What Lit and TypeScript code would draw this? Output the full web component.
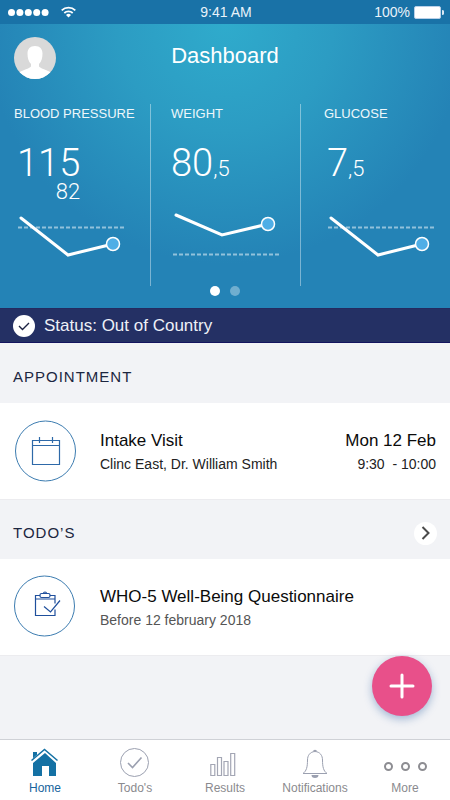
import { LitElement, html, css, svg, nothing } from "lit";
import { customElement, property } from "lit/decorators.js";
import { classMap } from "lit/directives/class-map.js";

interface Metric {
  label: string;
  value: string;
  fraction?: string;
  secondary?: string;
  points: [number, number][];
  target: number;
}

const METRICS: Metric[] = [
  { label: "BLOOD PRESSURE", value: "115", secondary: "82", points: [[7, 8], [54, 45], [99, 34]], target: 18 },
  { label: "WEIGHT", value: "80", fraction: ",5", points: [[5, 5], [51, 25], [97, 14]], target: 45 },
  { label: "GLUCOSE", value: "7", fraction: ",5", points: [[7, 8], [54, 45], [98, 34]], target: 18 },
];

const NAV = [
  {
    label: "Home",
    icon: svg`<g fill="#1471a4"><path d="M3 5h4v4l-4 4z"/><path d="M15 6l11 10v13h-7v-10h-7v10H3V16z"/></g>
      <path d="M1.500 14.500L14.500 3l13 11.500" fill="none" stroke="#fff" stroke-width="3"/>
      <path d="M1.500 13.500L14.500 2.500l13 11" fill="none" stroke="#1471a4" stroke-width="1.500"/>`,
  },
  {
    label: "Todo's",
    icon: svg`<g fill="none" stroke="#9ba0b0"><circle cx="14.500" cy="15.500" r="14"/>
      <path d="M8 16l4.500 4.500 9-10" stroke-width="1.600"/></g>`,
  },
  {
    label: "Results",
    icon: svg`<g fill="none" stroke="#a3a6b4" stroke-width="1.200"><path d="M.8 17.500h4v11h-4zM7.500 10.500h4v18h-4zM14 14.500h4v14h-4zM20.700 6.500h4v22h-4z"/></g>`,
  },
  {
    label: "Notifications",
    icon: svg`<path d="M15 4.500c-5 .3-7.500 4-7.500 8.500 0 7-1 11-4.500 13.500h24c-3.500-2.500-4.500-6.500-4.500-13.500 0-4.500-2.500-8.200-7.500-8.500z" fill="none" stroke="#9ba0b0"/>
      <path d="M13 4.500a2 1.700 0 0 1 4 0zM11.500 28h7a3.500 3 0 0 1-7 0z" fill="#9ba0b0"/>`,
  },
  { label: "More", icon: nothing },
];

@customElement("metric-tile")
class MetricTile extends LitElement {
  @property({ attribute: false }) metric!: Metric;

  static styles = css`
    :host { display: block; color: #fff; }
    .label { margin: 0 0 21px; font: 400 13px/20px "Liberation Sans", Arial, sans-serif; white-space: nowrap; color: #eef7fb; }
    .figure { height: 58px; font-family: Roboto, "Liberation Sans", sans-serif; font-weight: 300; }
    .block { display: inline-flex; flex-direction: column; }
    .value { font-size: 38px; line-height: 36px; }
    .fraction { font-size: 22px; }
    .secondary { font-size: 22px; line-height: 22px; text-align: right; }
    .indent { padding-left: 3px; }
    .chart { display: block; margin-top: 7px; width: 120px; height: 50px; }
  `;

  render() {
    const m = this.metric;
    const end = m.points[m.points.length - 1];
    const left = m.points[0][0] - 3;
    return html`
      <h2 class="label">${m.label}</h2>
      <div class=${classMap({ figure: true, indent: left > 3 })}>
        <div class="block">
          <span class="value">${m.value}${m.fraction ? html`<span class="fraction">${m.fraction}</span>` : nothing}</span>
          ${m.secondary ? html`<span class="secondary">${m.secondary}</span>` : nothing}
        </div>
      </div>
      <svg class="chart" viewBox="0 0 120 50" aria-hidden="true">
        <path d="M${left} ${m.target - 0.5}h106" stroke="#fff" stroke-opacity=".5" stroke-width="2" stroke-dasharray="4 2"/>
        <polyline points=${m.points.map((p) => p.join(",")).join(" ")} fill="none" stroke="#fff" stroke-width="3" stroke-linecap="round"/>
        <circle cx=${end[0]} cy=${end[1]} r="6.500" fill="#4faee6" stroke="#fff" stroke-width="1.500"/>
      </svg>
    `;
  }
}

@customElement("app-root")
class AppRoot extends LitElement {
  static styles = css`
    :host {
      display: flex; flex-direction: column; min-height: 100vh;
      background: #f2f3f6; color: #0b0b0b;
      font-family: "Liberation Sans", Arial, sans-serif;
    }
    h1, h2, h3, p { margin: 0; font-weight: 400; }
    button { border: 0; padding: 0; font: inherit; cursor: pointer; }
    .system {
      display: grid; grid-template-columns: 1fr auto 1fr; align-items: center;
      height: 24px; padding: 0 6px 0 8px; background: #1972a7; color: #e9f3fa;
      font-size: 14px; line-height: 24px;
    }
    .signal { display: flex; align-items: center; gap: 12px; }
    .battery { display: flex; align-items: center; justify-content: flex-end; gap: 4px; }
    .hero { background: radial-gradient(circle 240px at 50% 0, #2fabcc, #2c9cc3 45%, #2483b6); color: #fff; padding-bottom: 12px; }
    .bar { display: grid; grid-template-columns: 1fr auto 1fr; align-items: start; padding: 13px 14px 25px; }
    .avatar { width: 42px; height: 42px; border-radius: 50%; background: none; }
    .avatar svg { display: block; }
    .title { font-size: 22px; line-height: 38px; }
    .metrics { display: grid; grid-template-columns: repeat(3, 1fr); }
    .metric { padding: 0 0 26px 14px; }
    .metric + .metric { padding-left: 20px; border-left: 1px solid rgba(255, 255, 255, 0.4); }
    .metric + .metric + .metric { padding-left: 23px; }
    .dots { display: flex; justify-content: center; gap: 10px; }
    .dot { width: 10px; height: 10px; border-radius: 50%; background: #fff; opacity: 0.35; }
    .dot.on { opacity: 1; }
    .status {
      display: flex; align-items: center; gap: 9px; height: 33px; padding: 0 13px;
      background: #243064; border-bottom: 1px solid #14145f; border-top: 1px solid #242a60;
      color: #eef0f7; font-size: 17px;
    }
    .main { position: relative; flex: 1; }
    .section { display: flex; align-items: center; justify-content: space-between; box-sizing: border-box; height: 60px; padding: 8px 13px 0; }
    .heading { font-size: 15px; line-height: 20px; letter-spacing: 1px; color: #1c2640; }
    .next { display: grid; place-items: center; width: 23px; height: 23px; border-radius: 50%; background: #fff; }
    .card { display: flex; align-items: center; gap: 24px; height: 96px; padding: 0 14px; background: #fff; box-shadow: 0 1px #ececef; }
    .ring { flex: none; overflow: visible; }
    .grow { flex: 1; min-width: 0; }
    .when { text-align: right; }
    .name { padding-top: 2px; font-size: 17px; line-height: 24px; }
    .detail { font-size: 14px; line-height: 22px; color: #222; white-space: pre; }
    .muted { color: #555; }
    .fab {
      position: absolute; right: 18px; bottom: 23px; display: grid; place-items: center;
      width: 60px; height: 60px; border-radius: 50%; background: #e8508a;
      box-shadow: 0 3px 8px rgba(40, 90, 160, 0.4);
    }
    .nav { display: grid; grid-template-columns: repeat(5, 1fr); height: 60px; background: #fff; border-top: 1px solid #cfd1d6; }
    .tab { display: flex; flex-direction: column; align-items: center; padding-top: 7px; color: #8a8a8e; font-size: 12px; line-height: 18px; text-decoration: none; }
    .tab.active { color: #17649c; }
    .more { display: flex; align-items: center; gap: 8px; height: 32px; padding-top: 6px; box-sizing: border-box; }
    .more-dot { width: 5px; height: 5px; border: 2px solid #8d8d92; border-radius: 50%; }
  `;

  render() {
    return html`
      <div class="system">
        <div class="signal">
          <svg width="41" height="10" fill="#fff">${[3.5, 11.9, 20.3, 28.7, 37.1].map((x) => svg`<circle cx=${x} cy="5.500" r="3.500"/>`)}</svg>
          <svg width="15" height="12" viewBox="0 0 15 12" fill="none" stroke="#fff" stroke-width="1.800">
            <path d="M.7 4.300a10 10 0 0 1 13.600 0M3.300 7a6.200 6.200 0 0 1 8.400 0"/><path d="M7.500 11.500L5 9a3.600 3.600 0 0 1 5 0z" fill="#fff" stroke="none"/>
          </svg>
        </div>
        <span>9:41 AM</span>
        <div class="battery">
          <span>100%</span>
          <svg width="30" height="13"><rect x=".5" y=".5" width="26" height="12" rx="1.500" fill="#fff" stroke="#b9d0e8"/><path d="M28 4a2.500 2.500 0 0 1 0 5z" fill="#d9e7f3"/></svg>
        </div>
      </div>
      <header class="hero">
        <div class="bar">
          <button class="avatar" aria-label="Profile">
            <svg width="42" height="42" viewBox="0 0 42 42">
              <defs><clipPath id="face"><circle cx="21" cy="21" r="21"/></clipPath></defs>
              <g clip-path="url(#face)">
                <rect width="42" height="42" fill="#d9d9d9"/>
                <path d="M21 9c-5 0-7.500 3-7.500 7.500 0 4.500 1 8 3.500 10.500v2.500c-2 2.500-7.500 3-12 6V42h32v-6.500c-4.500-3-10-3.500-12-6V27c2.500-2.500 3.500-6 3.500-10.500C28.500 12 26 9 21 9z" fill="#fff"/>
              </g>
            </svg>
          </button>
          <h1 class="title">Dashboard</h1>
        </div>
        <div class="metrics">
          ${METRICS.map((m) => html`<metric-tile class="metric" .metric=${m}></metric-tile>`)}
        </div>
        <div class="dots"><span class="dot on"></span><span class="dot"></span></div>
      </header>
      <div class="status">
        <svg width="22" height="22"><circle cx="11" cy="11" r="11" fill="#fff"/><path d="M6 11l3.500 3.500 6.500-6.500" fill="none" stroke="#1c2242" stroke-width="1.400"/></svg>
        <span>Status: Out of Country</span>
      </div>
      <main class="main">
        <div class="section"><h2 class="heading">APPOINTMENT</h2></div>
        <article class="card">
          <svg class="ring" width="62" height="62" fill="none" stroke="#3c7cb0">
            <circle cx="31.500" cy="31" r="30"/>
            <path d="M18.500 20.500h27v24h-27zM18.500 25.500h27M25.500 17v6M38.500 17v6" stroke="#2e69a8" stroke-width="1.200"/>
          </svg>
          <div class="grow">
            <h3 class="name">Intake Visit</h3>
            <p class="detail">Clinc East, Dr. William Smith</p>
          </div>
          <div class="when">
            <p class="name">Mon 12 Feb</p>
            <p class="detail">9:30  - 10:00</p>
          </div>
        </article>
        <div class="section">
          <h2 class="heading">TODO’S</h2>
          <button class="next" aria-label="All todo's">
            <svg width="9" height="14" fill="none" stroke="#4a4a4a" stroke-width="2"><path d="M1.500 1l6 6-6 6"/></svg>
          </button>
        </div>
        <article class="card">
          <svg class="ring" width="62" height="62" fill="none" stroke="#3c7cb0">
            <circle cx="30.500" cy="30" r="30"/>
            <g stroke="#1f4f9c" stroke-width="1.200">
              <path d="M26 19.500h-4.500v20h19.500v-6M36 19.500h5v8M21.500 23h19.500"/>
              <rect x="26" y="17.500" width="10" height="4" rx="1.500"/><path d="M29.500 17.500a1.500 1.500 0 0 1 3 0"/>
              <path d="M30 30.500l6.500 5.500 9.500-11.500"/>
            </g>
          </svg>
          <div class="grow">
            <h3 class="name">WHO-5 Well-Being Questionnaire</h3>
            <p class="detail muted">Before 12 february 2018</p>
          </div>
        </article>
        <button class="fab" aria-label="Add">
          <svg width="26" height="26" stroke="#fff" stroke-width="3" stroke-linecap="round"><path d="M13 2v22M2 13h22"/></svg>
        </button>
      </main>
      <nav class="nav">
        ${NAV.map(
          (n, i) => html`<a href="#" class=${classMap({ tab: true, active: i === 0 })}>
            ${n.icon === nothing
              ? html`<span class="more"><span class="more-dot"></span><span class="more-dot"></span><span class="more-dot"></span></span>`
              : html`<svg width="30" height="32" aria-hidden="true">${n.icon}</svg>`}
            <span>${n.label}</span>
          </a>`
        )}
      </nav>
    `;
  }
}
